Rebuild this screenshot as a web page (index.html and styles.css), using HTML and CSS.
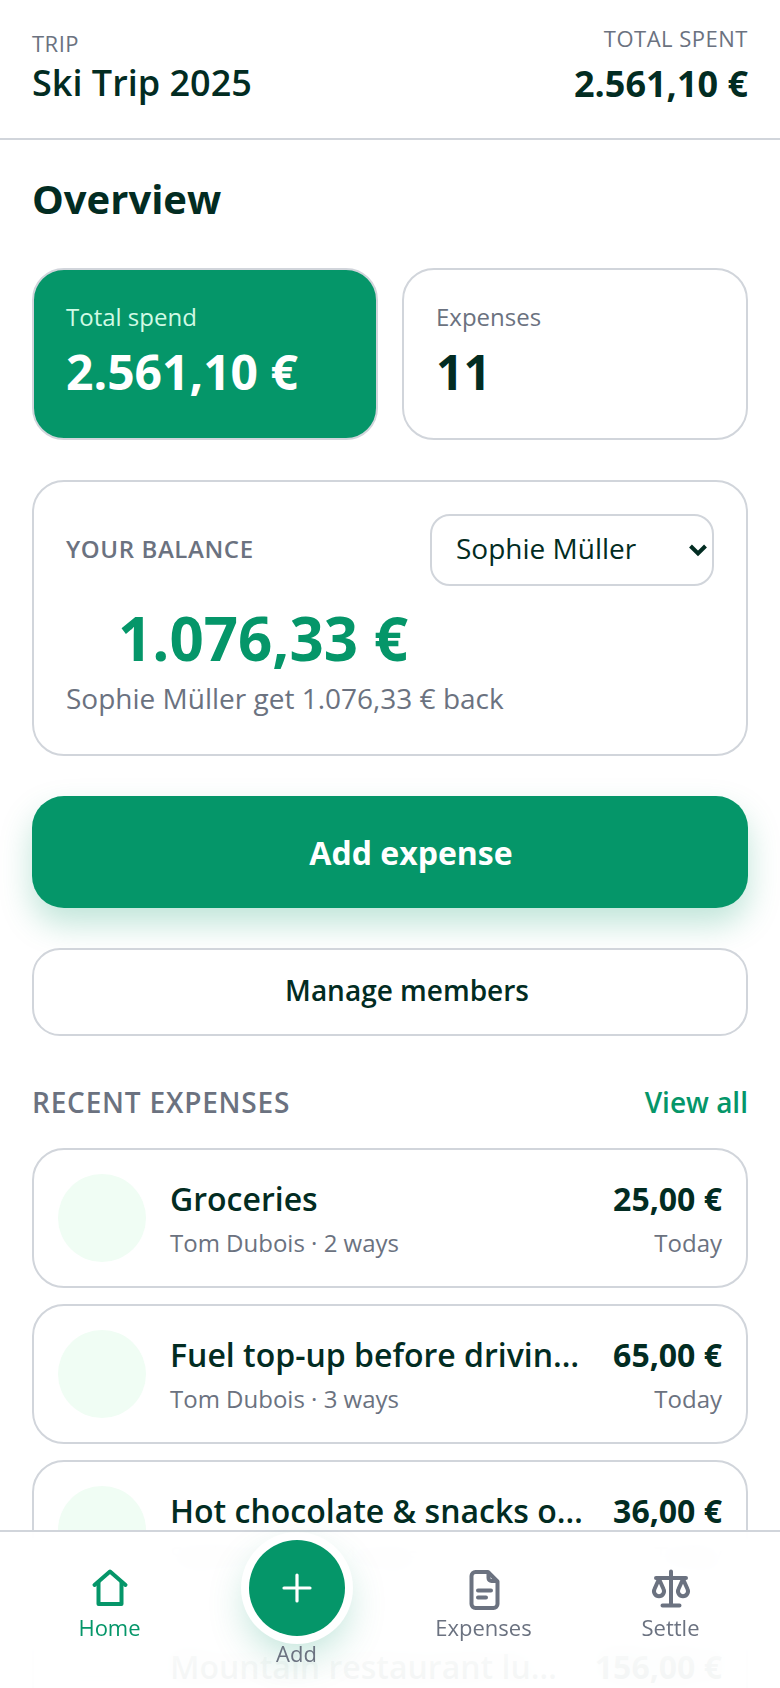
FILE: index.html
```html
<!DOCTYPE html>
<html>
  <head>
    <title>Ski Trip 2025</title>
    <link rel="stylesheet" href="styles.css">
  </head>
  <body>
    <div class="app">
      <header class="topbar">
        <div class="topbar-left">
          <div class="topbar-label">TRIP</div>
          <div class="topbar-title">Ski Trip 2025</div>
        </div>
        <div class="topbar-right">
          <div class="topbar-label">TOTAL SPENT</div>
          <div class="topbar-total">2.561,10 €</div>
        </div>
      </header>

      <main class="content">
        <h1 class="page-title">Overview</h1>

        <div class="stats">
          <div class="stat stat-green">
            <div class="stat-label">Total spend</div>
            <div class="stat-value">2.561,10 €</div>
          </div>
          <div class="stat">
            <div class="stat-label">Expenses</div>
            <div class="stat-value">11</div>
          </div>
        </div>

        <section class="balance">
          <div class="balance-top">
            <div class="balance-label">YOUR BALANCE</div>
            <div class="select-wrap">
              <select class="person-select">
                <option>Sophie Müller</option>
                <option>Tom Dubois</option>
              </select>
              <svg class="select-arrow" width="20" height="14" viewBox="0 0 20 14" fill="none" stroke="#022c22" stroke-width="4">
                <path d="M2.5 3 10 10.5 17.5 3"/>
              </svg>
            </div>
          </div>
          <div class="balance-amount">1.076,33 €</div>
          <div class="balance-note">Sophie Müller get 1.076,33 € back</div>
        </section>

        <button class="btn btn-primary">Add expense</button>
        <button class="btn btn-outline">Manage members</button>

        <div class="recent-head">
          <div class="recent-label">RECENT EXPENSES</div>
          <a class="view-all">View all</a>
        </div>

        <div class="expense-list">
          <div class="expense">
            <div class="expense-icon"></div>
            <div class="expense-main">
              <div class="expense-name">Groceries</div>
              <div class="expense-meta">Tom Dubois · 2 ways</div>
            </div>
            <div class="expense-side">
              <div class="expense-amount">25,00 €</div>
              <div class="expense-meta">Today</div>
            </div>
          </div>
          <div class="expense">
            <div class="expense-icon"></div>
            <div class="expense-main">
              <div class="expense-name">Fuel top-up before driving home</div>
              <div class="expense-meta">Tom Dubois · 3 ways</div>
            </div>
            <div class="expense-side">
              <div class="expense-amount">65,00 €</div>
              <div class="expense-meta">Today</div>
            </div>
          </div>
          <div class="expense">
            <div class="expense-icon"></div>
            <div class="expense-main">
              <div class="expense-name">Hot chocolate &amp; snacks on the slopes</div>
              <div class="expense-meta">Sophie Müller · 4 ways</div>
            </div>
            <div class="expense-side">
              <div class="expense-amount">36,00 €</div>
              <div class="expense-meta">Today</div>
            </div>
          </div>
          <div class="expense">
            <div class="expense-icon"></div>
            <div class="expense-main">
              <div class="expense-name">Mountain restaurant lunch on day two</div>
              <div class="expense-meta">Tom Dubois · 4 ways</div>
            </div>
            <div class="expense-side">
              <div class="expense-amount">156,00 €</div>
              <div class="expense-meta">Today</div>
            </div>
          </div>
        </div>
      </main>

      <nav class="tabbar">
        <a class="tab tab-active">
          <svg width="48" height="48" viewBox="0 0 48 48" fill="none" stroke="currentColor" stroke-width="4" stroke-linecap="round" stroke-linejoin="round">
            <path d="M8.5 19 24 5.5 39.5 19"/>
            <path d="M12.5 16v22h23V16"/>
          </svg>
          <span>Home</span>
        </a>
        <a class="tab tab-add">
          <span class="add-circle">
            <svg width="32" height="32" viewBox="0 0 32 32" fill="none" stroke="#fff" stroke-width="3.2" stroke-linecap="round">
              <path d="M16 3v26M3 16h26"/>
            </svg>
          </span>
          <span>Add</span>
        </a>
        <a class="tab">
          <svg width="48" height="48" viewBox="0 0 48 48" fill="none" stroke="currentColor" stroke-width="4" stroke-linecap="round" stroke-linejoin="round">
            <path d="M28 6H15.5a4 4 0 0 0-4 4v28a4 4 0 0 0 4 4h18a4 4 0 0 0 4-4V15.5z"/>
            <path d="M28.5 7v5a3 3 0 0 0 3 3h5"/>
            <path d="M18 24.5h13M18 31.5h8"/>
          </svg>
          <span>Expenses</span>
        </a>
        <a class="tab">
          <svg width="48" height="48" viewBox="0 0 48 48" fill="none" stroke="currentColor" stroke-width="4" stroke-linecap="round" stroke-linejoin="round">
            <path d="M24 5.5V39M15.5 39.5h17M9 12h30"/>
            <path d="M12 13 7.5 23a5 5 0 1 0 9 0z"/>
            <path d="M36 13l-4.500 10a5 5 0 1 0 9 0z"/>
          </svg>
          <span>Settle</span>
        </a>
      </nav>
    </div>
  </body>
</html>
```

FILE: styles.css
```css
* {
  box-sizing: border-box;
}
html,
body {
  margin: 0;
  height: 100%;
  overflow: hidden;
}
body {
  background: #fff;
  color: #022c22;
  font-family: "Open Sans", sans-serif;
}
.app {
  position: relative;
  height: 1688px;
  overflow: hidden;
}

/* top bar */
.topbar {
  display: flex;
  justify-content: space-between;
  align-items: flex-start;
  height: 140px;
  padding: 24px 32px 0;
  border-bottom: 2px solid #d1d5db;
}
.topbar-left {
  margin-top: 5px;
}
.topbar-right {
  text-align: right;
}
.topbar-label {
  font-size: 22px;
  line-height: 28px;
  letter-spacing: 0.5px;
  color: #6b7280;
}
.topbar-title {
  margin-top: 4px;
  font-size: 36px;
  line-height: 44px;
  font-weight: 600;
}
.topbar-total {
  margin-top: 10px;
  font-size: 36px;
  line-height: 44px;
  font-weight: 700;
}

.content {
  padding: 35px 32px 0;
}
.page-title {
  margin: 0 0 45px;
  font-size: 40px;
  line-height: 48px;
  font-weight: 700;
}

/* stat cards */
.stats {
  display: grid;
  grid-template-columns: 1fr 1fr;
  gap: 24px;
  margin-bottom: 40px;
}
.stat {
  height: 172px;
  padding: 31px 32px;
  border: 2px solid #d1d5db;
  border-radius: 32px;
}
.stat-green {
  background: #059669;
  color: #fff;
}
.stat-label {
  font-size: 24px;
  line-height: 32px;
  color: #6b7280;
}
.stat-green .stat-label {
  color: #d1fae5;
}
.stat-value {
  margin-top: 9px;
  font-size: 48px;
  line-height: 60px;
  font-weight: 700;
}

/* balance */
.balance {
  height: 276px;
  padding: 32px;
  margin-bottom: 40px;
  border: 2px solid #d1d5db;
  border-radius: 32px;
}
.balance-top {
  display: flex;
  justify-content: space-between;
  align-items: center;
}
.balance-label {
  margin-bottom: 2px;
  font-size: 24px;
  line-height: 32px;
  font-weight: 600;
  color: #6b7280;
  letter-spacing: 0.6px;
}
.select-wrap {
  position: relative;
  width: 284px;
}
.person-select {
  display: block;
  width: 100%;
  height: 72px;
  padding: 0 24px 4px;
  appearance: none;
  background: #fff;
  border: 2px solid #d1d5db;
  border-radius: 20px;
  color: #022c22;
  font-family: inherit;
  font-size: 28px;
}
.select-arrow {
  position: absolute;
  right: 6px;
  top: 29px;
}
.balance-amount {
  margin: 14px 0 0 52px;
  font-size: 60px;
  line-height: 76px;
  font-weight: 700;
  color: #059669;
}
.balance-note {
  margin-top: 2px;
  font-size: 28px;
  line-height: 40px;
  color: #6b7280;
}

/* buttons */
.btn {
  display: block;
  width: 100%;
  font-family: inherit;
  border-radius: 32px;
}
.btn-primary {
  height: 112px;
  margin-bottom: 40px;
  padding-left: 48px;
  background: #059669;
  border: 0;
  color: #fff;
  font-size: 32px;
  font-weight: 700;
  box-shadow: 0 16px 32px rgba(5, 150, 105, 0.25);
}
.btn-outline {
  height: 88px;
  margin-bottom: 48px;
  padding: 0 0 4px 34px;
  background: #fff;
  border: 2px solid #d1d5db;
  border-radius: 28px;
  color: #022c22;
  font-size: 28px;
  font-weight: 600;
}

/* recent list */
.recent-head {
  display: flex;
  justify-content: space-between;
  align-items: center;
  padding-bottom: 2px;
  margin-bottom: 26px;
}
.recent-label {
  font-size: 28px;
  line-height: 36px;
  font-weight: 600;
  color: #6b7280;
  letter-spacing: 0.8px;
}
.view-all {
  font-size: 28px;
  line-height: 36px;
  font-weight: 600;
  color: #059669;
}
.expense-list {
  display: flex;
  flex-direction: column;
  gap: 16px;
}
.expense {
  display: flex;
  align-items: center;
  gap: 24px;
  height: 140px;
  padding: 0 24px;
  border: 2px solid #d1d5db;
  border-radius: 32px;
}
.expense-icon {
  flex: none;
  width: 88px;
  height: 88px;
  border-radius: 50%;
  background: #f0fdf4;
}
.expense-main {
  flex: 1;
  min-width: 0;
}
.expense-side {
  flex: none;
  text-align: right;
}
.expense-name {
  font-size: 32px;
  line-height: 44px;
  font-weight: 600;
  white-space: nowrap;
  overflow: hidden;
  text-overflow: ellipsis;
}
.expense-amount {
  font-size: 32px;
  line-height: 44px;
  font-weight: 700;
}
.expense-meta {
  margin-top: 6px;
  font-size: 24px;
  line-height: 32px;
  color: #6b7280;
}

/* bottom nav, sits over the list */
.tabbar {
  position: absolute;
  left: 0;
  right: 0;
  bottom: 0;
  z-index: 1;
  height: 158px;
  display: grid;
  grid-template-columns: repeat(4, 1fr);
  padding: 0 16px;
  border-top: 2px solid #d1d5db;
}
/* blur fades out to the bottom so the row behind still reads faintly */
.tabbar::before,
.tabbar::after {
  content: "";
  position: absolute;
  inset: 0;
  z-index: -1;
}
.tabbar::before {
  backdrop-filter: blur(12px);
  mask-image: linear-gradient(#000 60%, rgba(0, 0, 0, 0.5) 85%);
}
.tabbar::after {
  background: rgba(255, 255, 255, 0.94);
}
.tab {
  display: flex;
  flex-direction: column;
  align-items: center;
  padding-top: 34px;
  font-size: 22px;
  line-height: 30px;
  color: #6b7280;
}
.tab > svg {
  margin-bottom: -2px;
}
.tab-active {
  color: #059669;
}
.tab-add {
  padding-top: 0;
  color: #6b7280;
}
.add-circle {
  display: flex;
  align-items: center;
  justify-content: center;
  width: 96px;
  height: 96px;
  margin-top: 8px;
  margin-bottom: 2px;
  border-radius: 50%;
  background: #059669;
  box-shadow: 0 0 0 8px #fff, 0 16px 40px rgba(5, 150, 105, 0.3);
}
```
